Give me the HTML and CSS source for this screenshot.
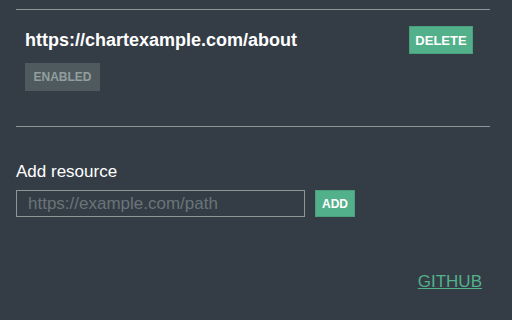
FILE: index.html
```html
<!DOCTYPE html>
<html lang="en">
<head>
    <meta charset="UTF-8">
    <title>Resources</title>
    <link rel="stylesheet" href="styles.css">
</head>
<body>
    <div class="panel">
        <div class="resource-list">
            <div class="resource">
                <div class="resource-head">
                    <span class="resource-url">https://chartexample.com/about</span>
                    <button class="btn-green btn-delete">DELETE</button>
                </div>
                <span class="badge">ENABLED</span>
            </div>
        </div>

        <div class="add-resource">
            <label for="resourceUrl">Add resource</label>
            <div class="add-row">
                <input type="text" id="resourceUrl" placeholder="https://example.com/path">
                <button class="btn-green btn-add">ADD</button>
            </div>
        </div>

        <div class="footer">
            <a href="#">GITHUB</a>
        </div>
    </div>
</body>
</html>
```

FILE: styles.css
```css
* {
    margin: 0;
    padding: 0;
    box-sizing: border-box;
}

body {
    font-family: 'Liberation Sans', Arial, sans-serif;
    background-color: #343d46;
    color: #fff;
    padding-top: 9px;
}

.panel {
    width: 474px;
    margin-left: 16px;
}

.resource-list {
    border-top: 1px solid #8c9797;
    border-bottom: 1px solid #8c9797;
}

.resource {
    padding: 16px 17px 35px 9px;
}

.resource-head {
    display: flex;
    justify-content: space-between;
    align-items: center;
}

.resource-url {
    font-size: 18px;
    font-weight: bold;
}

.btn-green {
    background-color: #52b08a;
    color: #fff;
    border: 1px solid #4a9f7d;
    font-family: inherit;
    font-weight: bold;
    cursor: pointer;
}

.btn-delete {
    width: 64px;
    height: 28px;
    font-size: 13px;
}

.badge {
    display: inline-block;
    margin-top: 9px;
    width: 75px;
    height: 28px;
    line-height: 28px;
    text-align: center;
    font-size: 12px;
    font-weight: bold;
    color: #939e9e;
    background-color: #4e5a5e;
}

.add-resource {
    margin-top: 35px;
}

.add-resource label {
    display: block;
    font-size: 17px;
    line-height: 20px;
    margin-bottom: 8px;
}

.add-row {
    display: flex;
    align-items: center;
    gap: 10px;
}

.add-row input {
    width: 289px;
    height: 27px;
    padding: 0 11px;
    border: 1px solid #8c9797;
    background: transparent;
    color: #fff;
    font-family: inherit;
    font-size: 17px;
    outline: none;
}

.add-row input::placeholder {
    color: #6a7478;
}

.btn-add {
    width: 40px;
    height: 27px;
    font-size: 12px;
}

.footer {
    display: flex;
    justify-content: flex-end;
    padding-right: 8px;
    margin-top: 55px;
}

.footer a {
    color: #52b08a;
    font-size: 17px;
}
```
